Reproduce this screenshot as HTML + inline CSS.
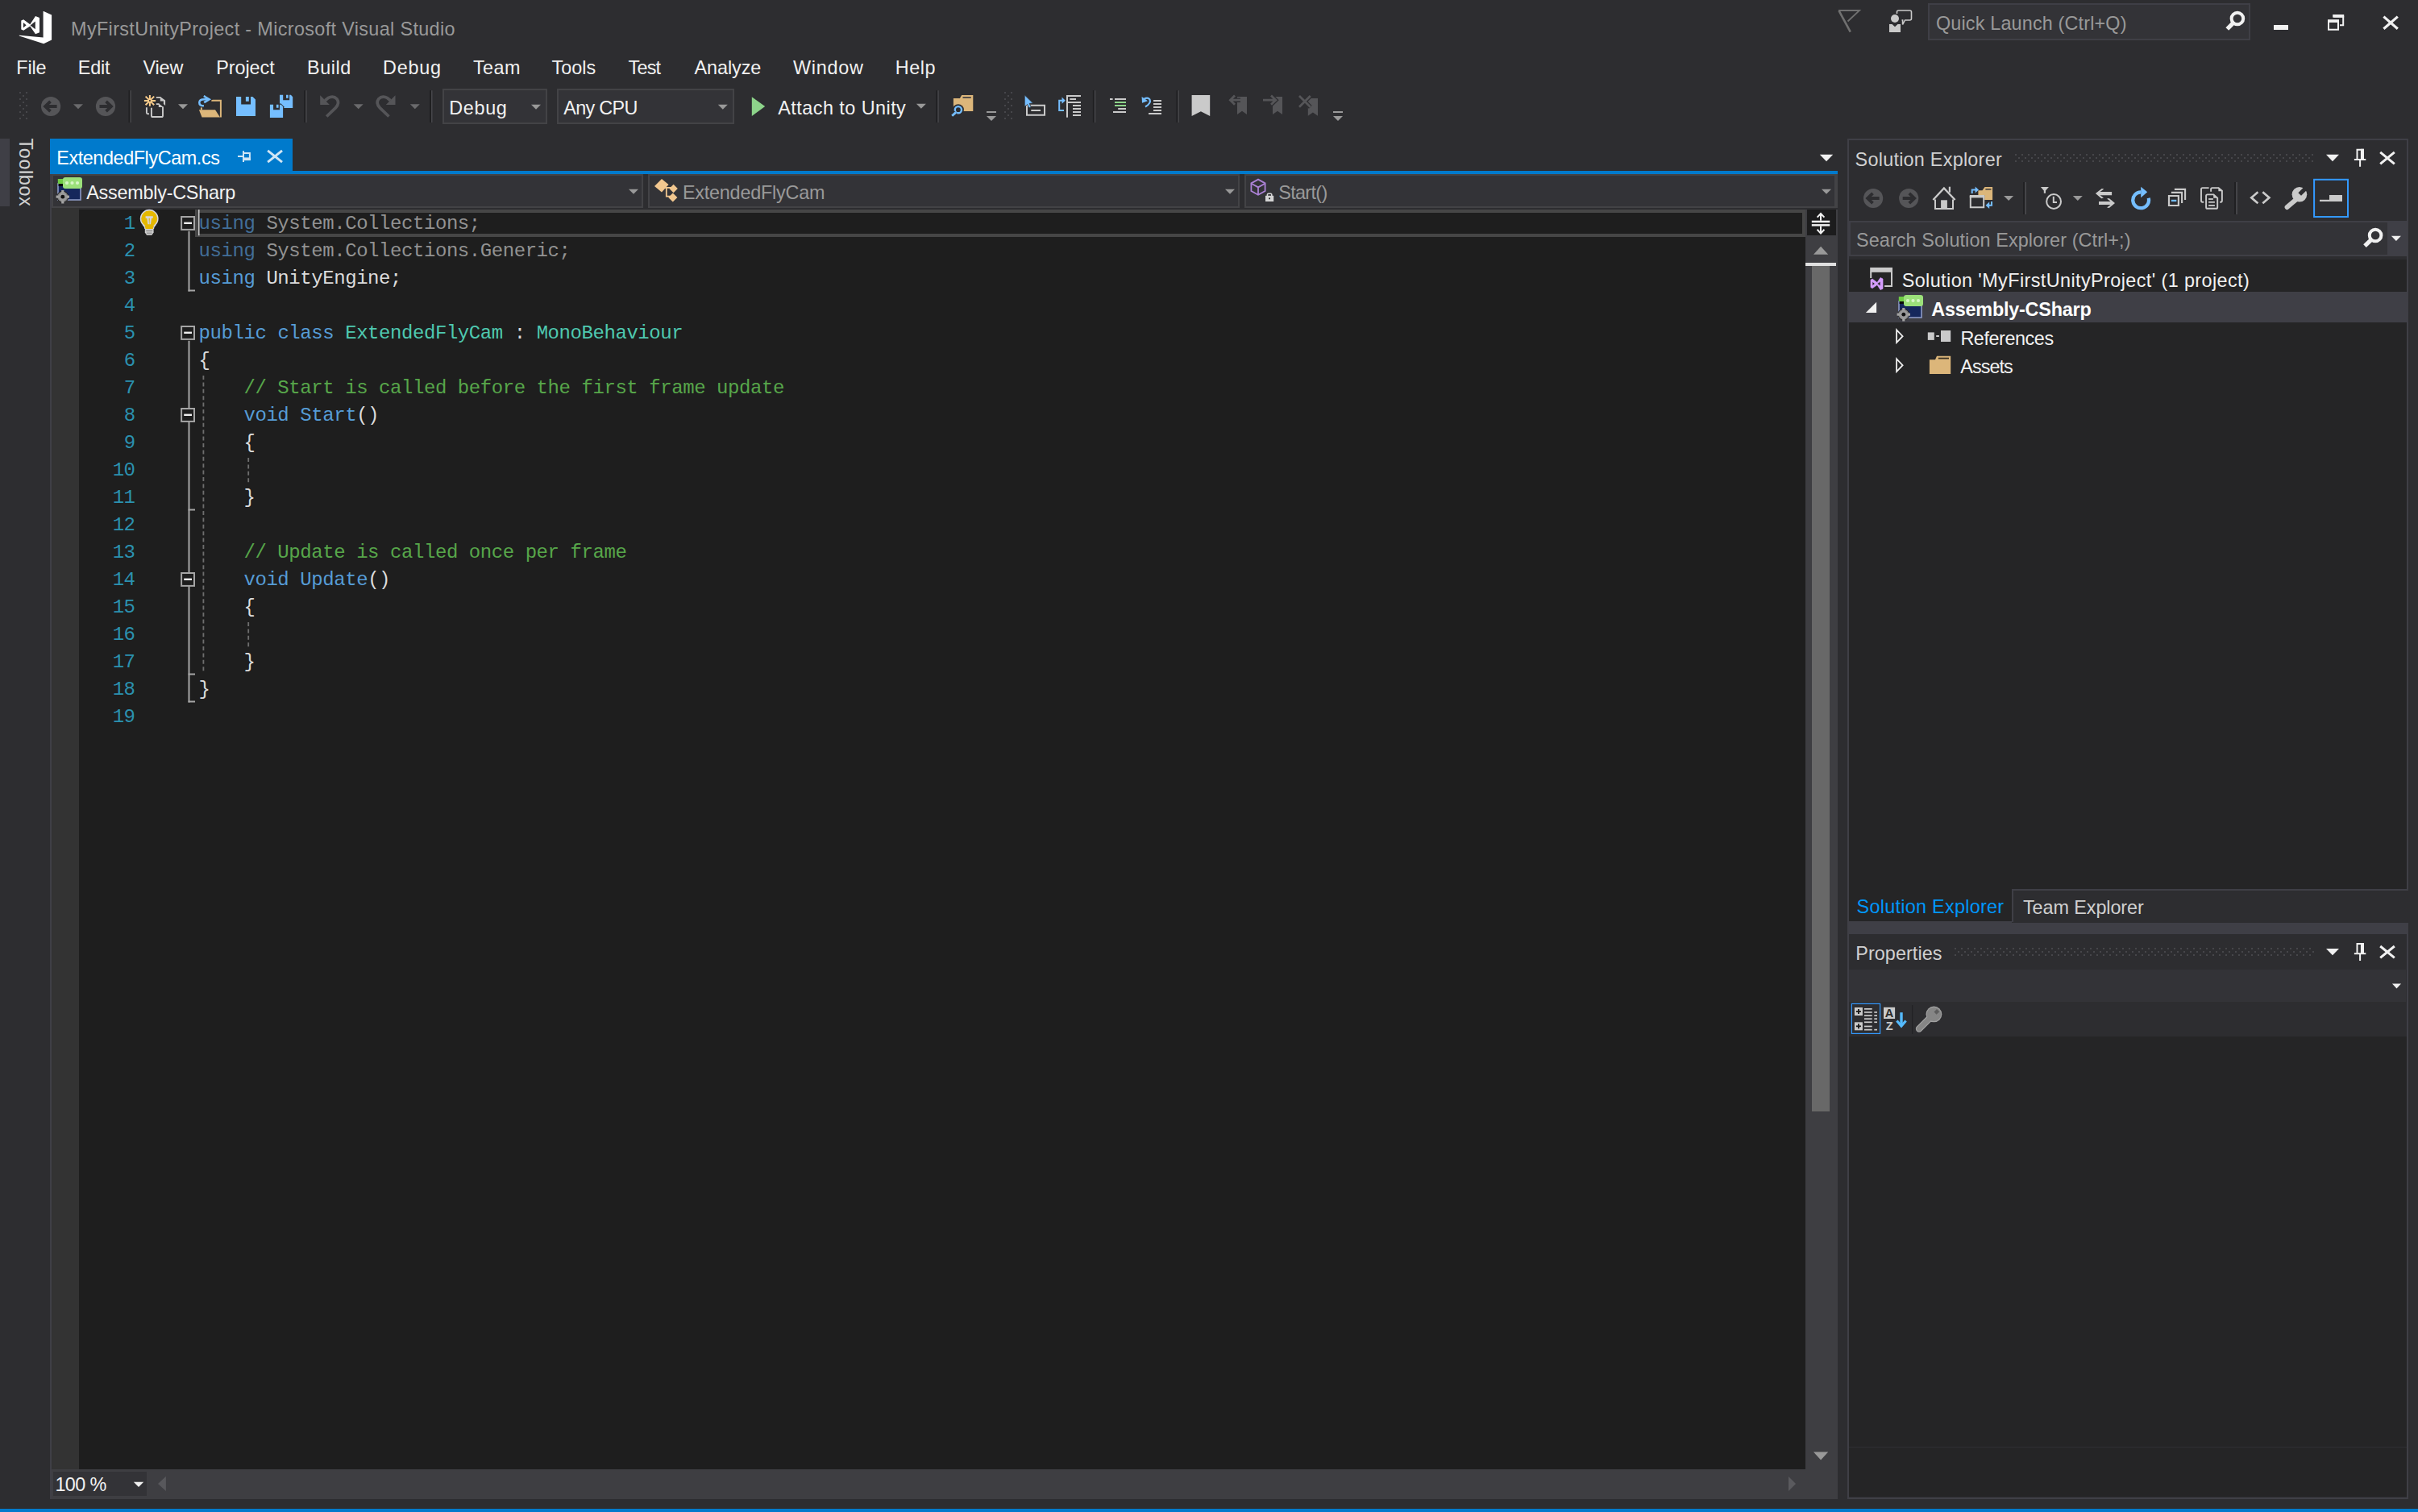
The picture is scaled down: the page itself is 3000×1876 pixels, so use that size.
<!DOCTYPE html>
<html><head><meta charset="utf-8"><title>MyFirstUnityProject - Microsoft Visual Studio</title>
<style>
html,body{margin:0;padding:0;background:#2D2D30;overflow:hidden}
#r{position:relative;width:3000px;height:1876px;overflow:hidden;background:#2D2D30;font-family:"Liberation Sans",sans-serif}
#r div,#r span,#r svg{position:absolute;display:block;white-space:pre}
#r .c{font-family:"Liberation Mono",monospace;font-size:24px;line-height:24px;letter-spacing:-0.435px}
#r .c i{font-style:normal}
</style></head>
<body><div id="r">
<div style="left:2392px;top:4.3px;width:400px;height:45.5px;background:#333337;box-sizing:border-box;border:2px solid #3F3F46"></div>
<div style="left:549px;top:110.2px;width:130px;height:43.4px;background:#333337;box-sizing:border-box;border:2px solid #434346"></div>
<div style="left:691px;top:110.2px;width:220px;height:43.4px;background:#333337;box-sizing:border-box;border:2px solid #434346"></div>
<div style="left:0px;top:172px;width:12px;height:84px;background:#3F3F46;"></div>
<div style="left:62px;top:172px;width:301px;height:44px;background:#007ACC;"></div>
<div style="left:62px;top:212px;width:2218px;height:4px;background:#007ACC;"></div>
<div style="left:62px;top:216px;width:2218px;height:42px;background:#434346;"></div>
<div style="left:62px;top:216px;width:2.3px;height:1644px;background:#3F3F46;"></div>
<div style="left:66.2px;top:218px;width:729.8px;height:37.8px;background:#333337;"></div>
<div style="left:797.9px;top:216px;width:5.9px;height:42px;background:#2D2D30;"></div>
<div style="left:806px;top:218px;width:730px;height:37.8px;background:#333337;"></div>
<div style="left:1537.9px;top:216px;width:5.9px;height:42px;background:#2D2D30;"></div>
<div style="left:1546px;top:218px;width:730px;height:37.8px;background:#333337;"></div>
<div style="left:64.3px;top:260px;width:2175.7px;height:1563px;background:#1E1E1E;"></div>
<div style="left:64px;top:258px;width:34px;height:1565px;background:#333333;"></div>
<div style="left:242.4px;top:260px;width:1997.6px;height:34px;background:transparent;box-sizing:border-box;border:4px solid #464646"></div>
<div style="left:2240px;top:260px;width:40px;height:1563px;background:#3E3E42;"></div>
<div style="left:2241.8px;top:260px;width:36.2px;height:32px;background:#1C1C1D;"></div>
<div style="left:2240px;top:326.1px;width:38px;height:3.9px;background:#E0E0E0;"></div>
<div style="left:2248px;top:330px;width:22px;height:1048.5px;background:#686868;"></div>
<div style="left:64.3px;top:1823px;width:2215.7px;height:37px;background:#3E3E42;"></div>
<div style="left:65.9px;top:1826px;width:116.1px;height:30px;background:#333337;"></div>
<div style="left:0px;top:1871.6px;width:3000px;height:5px;background:#007ACC;"></div>
<div style="left:2292px;top:172px;width:696px;height:933px;background:#2D2D30;box-sizing:border-box;border:2px solid #3F3F46"></div>
<div style="left:2294px;top:273.7px;width:692px;height:44.3px;background:#3F3F46;"></div>
<div style="left:2296px;top:275.8px;width:666px;height:40px;background:#333337;"></div>
<div style="left:2294px;top:322px;width:692px;height:781px;background:#252526;"></div>
<div style="left:2294px;top:361.8px;width:692px;height:38px;background:#3F3F46;"></div>
<div style="left:2292px;top:1103px;width:204px;height:40px;background:#252526;"></div>
<div style="left:2292px;top:1103px;width:2px;height:40px;background:#3F3F46;"></div>
<div style="left:2496px;top:1103px;width:492px;height:41px;background:#2D2D30;box-sizing:border-box;border-top:2px solid #3F3F46;border-left:2px solid #3F3F46"></div>
<div style="left:2292px;top:1145px;width:696px;height:14px;background:#3F3F46;"></div>
<div style="left:2292px;top:1143px;width:204px;height:2px;background:#3F3F46;"></div>
<div style="left:2292px;top:1159px;width:696px;height:701px;background:#2D2D30;box-sizing:border-box;border:2px solid #3F3F46;border-top:none"></div>
<div style="left:2294px;top:1203px;width:691px;height:40px;background:#333337;"></div>
<div style="left:2294px;top:1285.5px;width:692px;height:571.7px;background:#252526;"></div>
<div style="left:2294px;top:1795px;width:692px;height:1px;background:#2F2F33;"></div>
<span class="c" style="left:153.63px;top:266.00px;color:#2B91AF">1</span>
<span class="c" style="left:246.6px;top:266.00px"><i style="color:#426E98">using</i><i style="color:#929292"> System.Collections;</i></span>
<span class="c" style="left:153.63px;top:300.00px;color:#2B91AF">2</span>
<span class="c" style="left:246.6px;top:300.00px"><i style="color:#426E98">using</i><i style="color:#929292"> System.Collections.Generic;</i></span>
<span class="c" style="left:153.63px;top:334.00px;color:#2B91AF">3</span>
<span class="c" style="left:246.6px;top:334.00px"><i style="color:#569CD6">using</i><i style="color:#DCDCDC"> UnityEngine;</i></span>
<span class="c" style="left:153.63px;top:368.00px;color:#2B91AF">4</span>
<span class="c" style="left:153.63px;top:402.00px;color:#2B91AF">5</span>
<span class="c" style="left:246.6px;top:402.00px"><i style="color:#569CD6">public</i><i style="color:#DCDCDC"> </i><i style="color:#569CD6">class</i><i style="color:#DCDCDC"> </i><i style="color:#4EC9B0">ExtendedFlyCam</i><i style="color:#DCDCDC"> : </i><i style="color:#4EC9B0">MonoBehaviour</i></span>
<span class="c" style="left:153.63px;top:436.00px;color:#2B91AF">6</span>
<span class="c" style="left:246.6px;top:436.00px"><i style="color:#DCDCDC">{</i></span>
<span class="c" style="left:153.63px;top:470.00px;color:#2B91AF">7</span>
<span class="c" style="left:246.6px;top:470.00px"><i style="color:#DCDCDC">    </i><i style="color:#57A64A">// Start is called before the first frame update</i></span>
<span class="c" style="left:153.63px;top:504.00px;color:#2B91AF">8</span>
<span class="c" style="left:246.6px;top:504.00px"><i style="color:#DCDCDC">    </i><i style="color:#569CD6">void</i><i style="color:#DCDCDC"> </i><i style="color:#569CD6">Start</i><i style="color:#DCDCDC">()</i></span>
<span class="c" style="left:153.63px;top:538.00px;color:#2B91AF">9</span>
<span class="c" style="left:246.6px;top:538.00px"><i style="color:#DCDCDC">    {</i></span>
<span class="c" style="left:139.67px;top:572.00px;color:#2B91AF">10</span>
<span class="c" style="left:139.67px;top:606.00px;color:#2B91AF">11</span>
<span class="c" style="left:246.6px;top:606.00px"><i style="color:#DCDCDC">    }</i></span>
<span class="c" style="left:139.67px;top:640.00px;color:#2B91AF">12</span>
<span class="c" style="left:139.67px;top:674.00px;color:#2B91AF">13</span>
<span class="c" style="left:246.6px;top:674.00px"><i style="color:#DCDCDC">    </i><i style="color:#57A64A">// Update is called once per frame</i></span>
<span class="c" style="left:139.67px;top:708.00px;color:#2B91AF">14</span>
<span class="c" style="left:246.6px;top:708.00px"><i style="color:#DCDCDC">    </i><i style="color:#569CD6">void</i><i style="color:#DCDCDC"> </i><i style="color:#569CD6">Update</i><i style="color:#DCDCDC">()</i></span>
<span class="c" style="left:139.67px;top:742.00px;color:#2B91AF">15</span>
<span class="c" style="left:246.6px;top:742.00px"><i style="color:#DCDCDC">    {</i></span>
<span class="c" style="left:139.67px;top:776.00px;color:#2B91AF">16</span>
<span class="c" style="left:139.67px;top:810.00px;color:#2B91AF">17</span>
<span class="c" style="left:246.6px;top:810.00px"><i style="color:#DCDCDC">    }</i></span>
<span class="c" style="left:139.67px;top:844.00px;color:#2B91AF">18</span>
<span class="c" style="left:246.6px;top:844.00px"><i style="color:#DCDCDC">}</i></span>
<span class="c" style="left:139.67px;top:878.00px;color:#2B91AF">19</span>
<svg style="left:0;top:0" width="3000" height="1876" viewBox="0 0 3000 1876"><path d="M54.2 13.9L64.1 18.6V49.6L54.2 54.2L23.8 44.4V43.7L53.6 46.4V13.9Z" fill="#FFFFFF" /><path d="M26.3 25.6L29.2 24.2L37.3 30.3L44 19.9L49 22.1V40.3L44 42.2L37.3 32.6L29.2 37.8L26.3 36.4Z M28.9 28V34.6L32.6 31.3Z M43.8 26.6V36.2L37.6 31.4Z" fill="#FFFFFF" fill-rule="evenodd"/><path d="M2281 13H2307L2292.5 26.5" fill="none" stroke="#707070" stroke-width="1.8" /><path d="M2281.6 13.4L2295.8 39.6" fill="none" stroke="#707070" stroke-width="2.6" /><circle cx="2351" cy="23" r="5" fill="#CACACA"/><path d="M2344 30H2347.5L2351 33.2L2354.5 30H2358V40H2344Z" fill="#CACACA" /><path d="M2353.5 17V15Q2353.5 13 2355.5 13H2369.5Q2371.5 13 2371.5 15V23Q2371.5 25 2369.5 25H2363.5L2360.6 30.5V25H2359.5" fill="none" stroke="#CACACA" stroke-width="1.6" /><circle cx="2775.9" cy="23" r="7.3" fill="none" stroke="#F1F1F1" stroke-width="4"/><path d="M2770.6 28.6L2763.3 36" fill="none" stroke="#F1F1F1" stroke-width="5.2" /><rect x="2821" y="31" width="18" height="6" fill="#F1F1F1" /><path d="M2895.2 20.8H2907.2V31.3H2903" fill="none" stroke="#F1F1F1" stroke-width="2" /><rect x="2894.2" y="18" width="14" height="3.6" fill="#F1F1F1" /><path d="M2889 26.8H2901V36.8H2889Z" fill="none" stroke="#F1F1F1" stroke-width="2" /><rect x="2888" y="24.2" width="14" height="3.6" fill="#F1F1F1" /><path d="M2957.4 20.6L2974.8 35.8M2974.8 20.6L2957.4 35.8" fill="none" stroke="#F1F1F1" stroke-width="3.2" /><rect x="24" y="114" width="2" height="2" fill="#46464A" /><rect x="32" y="114" width="2" height="2" fill="#46464A" /><rect x="28" y="118" width="2" height="2" fill="#46464A" /><rect x="24" y="122" width="2" height="2" fill="#46464A" /><rect x="32" y="122" width="2" height="2" fill="#46464A" /><rect x="28" y="126" width="2" height="2" fill="#46464A" /><rect x="24" y="130" width="2" height="2" fill="#46464A" /><rect x="32" y="130" width="2" height="2" fill="#46464A" /><rect x="28" y="134" width="2" height="2" fill="#46464A" /><rect x="24" y="138" width="2" height="2" fill="#46464A" /><rect x="32" y="138" width="2" height="2" fill="#46464A" /><rect x="28" y="142" width="2" height="2" fill="#46464A" /><rect x="24" y="146" width="2" height="2" fill="#46464A" /><rect x="32" y="146" width="2" height="2" fill="#46464A" /><rect x="159.5" y="112.2" width="1.9" height="39.8" fill="#1F1F21" /><rect x="161.4" y="112.2" width="1.5" height="39.8" fill="#46464A" /><rect x="377.3" y="112.2" width="1.9" height="39.8" fill="#1F1F21" /><rect x="379.2" y="112.2" width="1.5" height="39.8" fill="#46464A" /><rect x="533.1" y="112.2" width="1.9" height="39.8" fill="#1F1F21" /><rect x="535.0" y="112.2" width="1.5" height="39.8" fill="#46464A" /><rect x="1161.4" y="112.2" width="1.9" height="39.8" fill="#1F1F21" /><rect x="1163.3000000000002" y="112.2" width="1.5" height="39.8" fill="#46464A" /><rect x="1355.9" y="112.2" width="1.9" height="39.8" fill="#1F1F21" /><rect x="1357.8000000000002" y="112.2" width="1.5" height="39.8" fill="#46464A" /><rect x="1459.5" y="112.2" width="1.9" height="39.8" fill="#1F1F21" /><rect x="1461.4" y="112.2" width="1.5" height="39.8" fill="#46464A" /><circle cx="63.1" cy="132" r="12.1" fill="#555558"/><path d="M70.6 132H56.1M62.5 125.8L56.1 132L62.5 138.2" fill="none" stroke="#2D2D30" stroke-width="3.8" /><path d="M91.0 129.2H103.0L97 135.2Z" fill="#6A6A6C" /><circle cx="131" cy="132" r="12.1" fill="#555558"/><path d="M123.5 132H138M131.6 125.8L138 132L131.6 138.2" fill="none" stroke="#2D2D30" stroke-width="3.8" /><path d="M185.9 117.9V131.8M178.9 124.9H193.1M180.6 119.6L191.2 130.2M191.2 119.6L180.6 130.2" fill="none" stroke="#F7CB8A" stroke-width="2" /><rect x="185.1" y="124.1" width="1.6" height="1.6" fill="#1E1E20" /><path d="M193.8 120.9H199.4" fill="none" stroke="#CACACA" stroke-width="1.8" /><path d="M198.8 120.1L205.1 124.6V131L202.9 129V125.4H198.8Z" fill="#CACACA" /><path d="M193.8 129.1H197.4" fill="none" stroke="#CACACA" stroke-width="1.8" /><path d="M187.9 133.8V143.4Q187.9 145 189.5 145H200.4Q202 145 202 143.4V132.6" fill="none" stroke="#CACACA" stroke-width="1.9" /><path d="M196.8 128.3L202.9 132.9H196.8Z" fill="#CACACA" /><path d="M181.9 133.3V139.8Q181.9 141.3 183.4 141.3H184.9" fill="none" stroke="#CACACA" stroke-width="1.9" /><path d="M221.0 129.2H233.0L227 135.2Z" fill="#999999" /><path d="M262.3 124.7H273.9V145.6" fill="none" stroke="#DCB67A" stroke-width="2" /><path d="M246.9 136.3H267L273 145.6H250.6Z" fill="#DCB67A" /><rect x="248.9" y="133.4" width="2" height="3" fill="#DCB67A" /><path d="M252.8 119.2L259.6 123.2L253.2 127.2" fill="none" stroke="#2D2D30" stroke-width="4.6" /><path d="M252.9 131.2C249.4 131.2 247.3 129.6 247.3 127.4C247.3 124.8 250 123.3 253.5 123.3H258" fill="none" stroke="#75BEFF" stroke-width="2.5" /><path d="M252.8 119.2L259.6 123.2L253.2 127.2" fill="none" stroke="#75BEFF" stroke-width="2.6" /><path d="M293 120H313.5L317 123.5V144H293Z M299.2 120V129.5H311.0V120H308.8V125.8H304.9V120Z" fill="#75BEFF" fill-rule="evenodd"/><path d="M347 117.8H360.8375L363.2 120.1625V134.0H347Z M351.185 117.8V124.21249999999999H359.15V117.8H357.665V121.715H355.0325V117.8Z" fill="#75BEFF" fill-rule="evenodd"/><path d="M333.6 128.5H348.6L352.3 132.2V147.3H333.6Z" fill="#2D2D30" /><path d="M334.9 129.8H348.73749999999995L351.09999999999997 132.16250000000002V146.0H334.9Z M339.085 129.8V136.2125H347.04999999999995V129.8H345.565V133.715H342.9325V129.8Z" fill="#75BEFF" fill-rule="evenodd"/><g transform="translate(396.7,117.5)"><path d="M8.5 27L19.6 16.4Q25.2 10.6 21.2 5.2Q16.8 0.6 10.2 4.2L6.5 7.2" fill="none" stroke="#555558" stroke-width="3.7"/><path d="M0.5 0.8V12.6H12.2Z" fill="#555558"/></g><path d="M438.7 129.2H450.7L444.7 135.2Z" fill="#6A6A6C" /><g transform="translate(491.0,117.5) scale(-1,1)"><path d="M8.5 27L19.6 16.4Q25.2 10.6 21.2 5.2Q16.8 0.6 10.2 4.2L6.5 7.2" fill="none" stroke="#555558" stroke-width="3.7"/><path d="M0.5 0.8V12.6H12.2Z" fill="#555558"/></g><path d="M508.79999999999995 129.2H520.8L514.8 135.2Z" fill="#6A6A6C" /><path d="M659.0 129.8H671.0L665 135.8Z" fill="#999999" /><path d="M890.8 129.8H902.8L896.8 135.8Z" fill="#999999" /><path d="M932.8 120.2L949.2 132L932.8 144Z" fill="#8DD48A" /><path d="M1136.9 128.8H1148.9L1142.9 134.8Z" fill="#999999" /><path d="M1182.9 122.1H1190.9L1193.2 117.9H1207.3V138.1H1182.9Z" fill="#DCB67A" /><rect x="1194.5" y="120.3" width="10.3" height="1.4" fill="#1f2433" /><circle cx="1188.9" cy="136.2" r="7" fill="#2D2D30"/><circle cx="1188.9" cy="136.2" r="4.1" fill="#2D2D30" stroke="#75BEFF" stroke-width="2.4"/><path d="M1186 139.4L1181.2 143.8" fill="none" stroke="#2D2D30" stroke-width="4.6" /><path d="M1186 139.4L1181.2 143.8" fill="none" stroke="#75BEFF" stroke-width="2.8" /><rect x="1224" y="138" width="12" height="2" fill="#999999" /><path d="M1224 144H1236L1230 150Z" fill="#999999" /><rect x="1246" y="114" width="2" height="2" fill="#46464A" /><rect x="1254" y="114" width="2" height="2" fill="#46464A" /><rect x="1250" y="118" width="2" height="2" fill="#46464A" /><rect x="1246" y="122" width="2" height="2" fill="#46464A" /><rect x="1254" y="122" width="2" height="2" fill="#46464A" /><rect x="1250" y="126" width="2" height="2" fill="#46464A" /><rect x="1246" y="130" width="2" height="2" fill="#46464A" /><rect x="1254" y="130" width="2" height="2" fill="#46464A" /><rect x="1250" y="134" width="2" height="2" fill="#46464A" /><rect x="1246" y="138" width="2" height="2" fill="#46464A" /><rect x="1254" y="138" width="2" height="2" fill="#46464A" /><rect x="1250" y="142" width="2" height="2" fill="#46464A" /><rect x="1246" y="146" width="2" height="2" fill="#46464A" /><rect x="1254" y="146" width="2" height="2" fill="#46464A" /><path d="M1274 130.8H1296V142.8H1274Z" fill="#2D2D30" stroke="#CACACA" stroke-width="2" /><rect x="1279.3" y="136" width="11.7" height="2" fill="#CACACA" /><path d="M1271.2 117.8L1281.6 128L1277.3 128.4L1279.3 133L1276.6 134L1274.6 129.6L1271.2 132.4Z" fill="#75BEFF" stroke="#2D2D30" stroke-width="0.8" /><rect x="1323" y="118" width="2" height="27.7" fill="#CACACA" /><rect x="1323" y="118" width="18" height="2" fill="#CACACA" /><rect x="1327.3" y="122" width="7.7" height="2" fill="#CACACA" /><rect x="1323" y="126" width="18" height="2" fill="#CACACA" /><rect x="1331" y="130" width="10" height="2" fill="#CACACA" /><rect x="1331" y="134" width="10" height="2" fill="#CACACA" /><rect x="1331" y="138" width="10" height="2" fill="#CACACA" /><rect x="1331" y="142" width="10" height="2" fill="#CACACA" /><path d="M1320 137H1314.2V124.7H1320" fill="none" stroke="#75BEFF" stroke-width="2" /><path d="M1317.5 120.6L1321.8 124.7L1317.5 128.8Z" fill="#75BEFF" /><rect x="1377" y="122" width="3.6" height="2" fill="#CACACA" /><rect x="1383" y="122" width="14" height="2" fill="#CACACA" /><rect x="1383" y="126" width="14" height="2" fill="#8DD48A" /><rect x="1383" y="130" width="14" height="2" fill="#8DD48A" /><rect x="1387.2" y="134" width="9.8" height="2" fill="#CACACA" /><rect x="1381" y="138" width="16" height="2" fill="#CACACA" /><path d="M1421 132.5Q1428.5 128 1426.5 123.5Q1424 120.2 1419.5 122.8" fill="none" stroke="#75BEFF" stroke-width="2.2" /><path d="M1416.6 120L1417 127.8L1424 125.2Z" fill="#75BEFF" /><rect x="1431" y="124" width="10" height="2" fill="#CACACA" /><rect x="1431" y="128" width="10" height="2" fill="#CACACA" /><rect x="1431" y="132" width="10" height="2" fill="#CACACA" /><rect x="1431" y="136" width="10" height="2" fill="#CACACA" /><rect x="1425" y="140" width="16" height="2" fill="#CACACA" /><path d="M1478.6 118H1501.2V144L1489.9 138.3L1478.6 144Z" fill="#CACACA" /><path d="M1535 120H1547V142L1541.0 137.8L1535 142Z" fill="#555558" /><path d="M1539 124.2H1527.5M1532 118.6L1526.4 124.2L1532 129.8" fill="none" stroke="#2D2D30" stroke-width="5.4" /><path d="M1539 124.2H1527.5M1532 118.6L1526.4 124.2L1532 129.8" fill="none" stroke="#555558" stroke-width="2.8" /><path d="M1579 120H1591V142L1585.0 137.8L1579 142Z" fill="#555558" /><path d="M1567 124.2H1582M1577 118.6L1582.8 124.2L1577 129.8" fill="none" stroke="#2D2D30" stroke-width="5.4" /><path d="M1567 124.2H1582M1577 118.6L1582.8 124.2L1577 129.8" fill="none" stroke="#555558" stroke-width="2.8" /><path d="M1622.8 122H1635.0V143.8L1628.8999999999999 139.60000000000002L1622.8 143.8Z" fill="#555558" /><path d="M1612 119L1625.8 132.8M1625.8 119L1612 132.8" fill="none" stroke="#2D2D30" stroke-width="5.4" /><path d="M1612 119L1625.8 132.8M1625.8 119L1612 132.8" fill="none" stroke="#555558" stroke-width="2.8" /><rect x="1654" y="138" width="12" height="2" fill="#999999" /><path d="M1654 144H1666L1660 150Z" fill="#999999" /><rect x="295" y="193" width="6.3" height="2" fill="#D0E6F5" /><rect x="301" y="187.2" width="2" height="13.8" fill="#D0E6F5" /><path d="M303 190.1H309.9V198.1H303" fill="none" stroke="#D0E6F5" stroke-width="2" /><rect x="303" y="195.4" width="7.9" height="3.7" fill="#D0E6F5" /><path d="M332.2 186.9L350 201.2M350 186.9L332.2 201.2" fill="none" stroke="#D0E6F5" stroke-width="3" /><path d="M2257.8 191.7H2274.2L2266 200.2Z" fill="#F1F1F1" /><path d="M780.0 234.8H792.0L786 240.8Z" fill="#999999" /><path d="M1520.0 234.8H1532.0L1526 240.8Z" fill="#999999" /><path d="M2260.0 234.8H2272.0L2266 240.8Z" fill="#999999" /><rect x="72" y="228" width="28" height="20" fill="#15275C" stroke="#8C9AC6" stroke-width="1.6"/><rect x="72.6" y="227.4" width="26.8" height="3.6" fill="#0A0A0A" /><rect x="71.8" y="222" width="8" height="6" fill="#6FCB45" /><rect x="78" y="220" width="24" height="14" rx="3" fill="#9BE07A"/><circle cx="83.0" cy="227" r="2.1" fill="#D6F5C6"/><circle cx="89.5" cy="227" r="2.1" fill="#D6F5C6"/><circle cx="96.0" cy="227" r="2.1" fill="#D6F5C6"/><circle cx="77.8" cy="244.2" r="7.0" fill="#7E7E7E" stroke="#1a1a1a" stroke-width="1"/><path d="M77.8 236V252.4M69.6 244.2H86" fill="none" stroke="#A4A4A4" stroke-width="3.2" /><circle cx="77.8" cy="244.2" r="5.2" fill="#9A9A9A"/><circle cx="77.8" cy="244.2" r="2.4" fill="#111"/><path d="M821 222L829.5 229L821 238.5L812 231Z" fill="#F2C78F" /><path d="M820 232.8H833M826.8 232.8V243.6H833" fill="none" stroke="#F2C78F" stroke-width="1.8" /><path d="M835.6 228.8L840.8000000000001 234L835.6 239.2L830.4 234Z" fill="#F2C78F" /><path d="M834.8 239.4L840.4 245L834.8 250.6L829.1999999999999 245Z" fill="#F2C78F" /><rect x="828.2" y="235.2" width="3" height="6" fill="#333337" /><path d="M1561 222.6L1569.6 227.4V237L1561 241.8L1552.4 237V227.4Z" fill="none" stroke="#AC82D6" stroke-width="1.8" /><path d="M1553 228L1561 232.4L1569 228M1561 232.4V241.5" fill="none" stroke="#AC82D6" stroke-width="1.8" /><rect x="1570" y="242.8" width="10.2" height="7.2" fill="#D4D4D4" /><path d="M1572.4 243V241.6Q1572.4 240.2 1573.8 240.2H1576.4Q1577.8 240.2 1577.8 241.6V243" fill="none" stroke="#D4D4D4" stroke-width="1.6" /><rect x="1574.2" y="245.4" width="1.8" height="1.8" fill="#222" /><circle cx="185.2" cy="271.2" r="10.7" fill="#E5B800" stroke="#D6D6E0" stroke-width="1.4"/><path d="M179.3 279.6L180 284H190.4L191.1 279.6Z" fill="#E5B800" /><path d="M177.2 278.5Q180 281.5 180 284M193.2 278.5Q190.4 281.5 190.4 284" fill="none" stroke="#D6D6E0" stroke-width="1.4" /><path d="M180.6 268.2H189.8V270.7H180.6Z M182.4 270.7L183.4 278.2H185L184.5 270.7Z M188 270.7L187 278.2H185.4L185.9 270.7Z" fill="#D6D6E0" /><path d="M179.8 284H190.6V288.6L188.4 291.8H182L179.8 288.6Z" fill="#D0D0D0" /><rect x="181.2" y="285.8" width="8" height="1.3" fill="#8A8A8A" /><rect x="181.8" y="288.6" width="6.8" height="1.2" fill="#8A8A8A" /><rect x="246.1" y="260" width="1.4" height="32.2" fill="#D4D4D4" /><rect x="233.5" y="286.8" width="2" height="74.69999999999999" fill="#A5A5A5" /><rect x="233.5" y="359.5" width="8.5" height="2" fill="#A5A5A5" /><rect x="233.5" y="422.8" width="2" height="448.7" fill="#A5A5A5" /><rect x="233.5" y="869.5" width="8.5" height="2" fill="#A5A5A5" /><rect x="233.5" y="631.5" width="8.5" height="2" fill="#A5A5A5" /><rect x="233.5" y="835.5" width="8.5" height="2" fill="#A5A5A5" /><rect x="225.1" y="269.0" width="15.9" height="15.9" fill="#1E1E1E" stroke="#A5A5A5" stroke-width="2"/><rect x="228.2" y="275.6" width="9.8" height="2.4" fill="#EDEDED" /><rect x="225.1" y="405.0" width="15.9" height="15.9" fill="#1E1E1E" stroke="#A5A5A5" stroke-width="2"/><rect x="228.2" y="411.6" width="9.8" height="2.4" fill="#EDEDED" /><rect x="225.1" y="507.0" width="15.9" height="15.9" fill="#1E1E1E" stroke="#A5A5A5" stroke-width="2"/><rect x="228.2" y="513.6" width="9.8" height="2.4" fill="#EDEDED" /><rect x="225.1" y="711.0" width="15.9" height="15.9" fill="#1E1E1E" stroke="#A5A5A5" stroke-width="2"/><rect x="228.2" y="717.5999999999999" width="9.8" height="2.4" fill="#EDEDED" /><path d="M252.4 466V833" fill="none" stroke="#6E6E6E" stroke-width="1.8" stroke-dasharray="5 3.4"/><path d="M308.2 568V601" fill="none" stroke="#6E6E6E" stroke-width="1.8" stroke-dasharray="5 3.4"/><path d="M308.2 772V805" fill="none" stroke="#6E6E6E" stroke-width="1.8" stroke-dasharray="5 3.4"/><rect x="2247.8" y="273.7" width="22.4" height="2.5" fill="#F1F1F1" /><rect x="2247.8" y="278.1" width="22.4" height="2.5" fill="#F1F1F1" /><path d="M2259 273.7V265.5M2254.6 269.6L2259 265L2263.4 269.6" fill="none" stroke="#F1F1F1" stroke-width="2" /><path d="M2259 280.6V289M2254.6 284.8L2259 289.6L2263.4 284.8" fill="none" stroke="#F1F1F1" stroke-width="2" /><path d="M2250 315.8H2268.2L2259.1 305.7Z" fill="#999999" /><path d="M2250 1801.5H2268.2L2259.1 1811.5Z" fill="#999999" /><path d="M205.9 1831.8V1850L196 1840.9Z" fill="#58585C" /><path d="M2219 1832V1850L2228 1841Z" fill="#5A5A5E" /><path d="M165.8 1838.7H178.2L172 1845.0Z" fill="#F1F1F1" /><rect x="2500" y="191" width="2" height="2" fill="#46464A" /><rect x="2500" y="199" width="2" height="2" fill="#46464A" /><rect x="2504" y="195" width="2" height="2" fill="#46464A" /><rect x="2508" y="191" width="2" height="2" fill="#46464A" /><rect x="2508" y="199" width="2" height="2" fill="#46464A" /><rect x="2512" y="195" width="2" height="2" fill="#46464A" /><rect x="2516" y="191" width="2" height="2" fill="#46464A" /><rect x="2516" y="199" width="2" height="2" fill="#46464A" /><rect x="2520" y="195" width="2" height="2" fill="#46464A" /><rect x="2524" y="191" width="2" height="2" fill="#46464A" /><rect x="2524" y="199" width="2" height="2" fill="#46464A" /><rect x="2528" y="195" width="2" height="2" fill="#46464A" /><rect x="2532" y="191" width="2" height="2" fill="#46464A" /><rect x="2532" y="199" width="2" height="2" fill="#46464A" /><rect x="2536" y="195" width="2" height="2" fill="#46464A" /><rect x="2540" y="191" width="2" height="2" fill="#46464A" /><rect x="2540" y="199" width="2" height="2" fill="#46464A" /><rect x="2544" y="195" width="2" height="2" fill="#46464A" /><rect x="2548" y="191" width="2" height="2" fill="#46464A" /><rect x="2548" y="199" width="2" height="2" fill="#46464A" /><rect x="2552" y="195" width="2" height="2" fill="#46464A" /><rect x="2556" y="191" width="2" height="2" fill="#46464A" /><rect x="2556" y="199" width="2" height="2" fill="#46464A" /><rect x="2560" y="195" width="2" height="2" fill="#46464A" /><rect x="2564" y="191" width="2" height="2" fill="#46464A" /><rect x="2564" y="199" width="2" height="2" fill="#46464A" /><rect x="2568" y="195" width="2" height="2" fill="#46464A" /><rect x="2572" y="191" width="2" height="2" fill="#46464A" /><rect x="2572" y="199" width="2" height="2" fill="#46464A" /><rect x="2576" y="195" width="2" height="2" fill="#46464A" /><rect x="2580" y="191" width="2" height="2" fill="#46464A" /><rect x="2580" y="199" width="2" height="2" fill="#46464A" /><rect x="2584" y="195" width="2" height="2" fill="#46464A" /><rect x="2588" y="191" width="2" height="2" fill="#46464A" /><rect x="2588" y="199" width="2" height="2" fill="#46464A" /><rect x="2592" y="195" width="2" height="2" fill="#46464A" /><rect x="2596" y="191" width="2" height="2" fill="#46464A" /><rect x="2596" y="199" width="2" height="2" fill="#46464A" /><rect x="2600" y="195" width="2" height="2" fill="#46464A" /><rect x="2604" y="191" width="2" height="2" fill="#46464A" /><rect x="2604" y="199" width="2" height="2" fill="#46464A" /><rect x="2608" y="195" width="2" height="2" fill="#46464A" /><rect x="2612" y="191" width="2" height="2" fill="#46464A" /><rect x="2612" y="199" width="2" height="2" fill="#46464A" /><rect x="2616" y="195" width="2" height="2" fill="#46464A" /><rect x="2620" y="191" width="2" height="2" fill="#46464A" /><rect x="2620" y="199" width="2" height="2" fill="#46464A" /><rect x="2624" y="195" width="2" height="2" fill="#46464A" /><rect x="2628" y="191" width="2" height="2" fill="#46464A" /><rect x="2628" y="199" width="2" height="2" fill="#46464A" /><rect x="2632" y="195" width="2" height="2" fill="#46464A" /><rect x="2636" y="191" width="2" height="2" fill="#46464A" /><rect x="2636" y="199" width="2" height="2" fill="#46464A" /><rect x="2640" y="195" width="2" height="2" fill="#46464A" /><rect x="2644" y="191" width="2" height="2" fill="#46464A" /><rect x="2644" y="199" width="2" height="2" fill="#46464A" /><rect x="2648" y="195" width="2" height="2" fill="#46464A" /><rect x="2652" y="191" width="2" height="2" fill="#46464A" /><rect x="2652" y="199" width="2" height="2" fill="#46464A" /><rect x="2656" y="195" width="2" height="2" fill="#46464A" /><rect x="2660" y="191" width="2" height="2" fill="#46464A" /><rect x="2660" y="199" width="2" height="2" fill="#46464A" /><rect x="2664" y="195" width="2" height="2" fill="#46464A" /><rect x="2668" y="191" width="2" height="2" fill="#46464A" /><rect x="2668" y="199" width="2" height="2" fill="#46464A" /><rect x="2672" y="195" width="2" height="2" fill="#46464A" /><rect x="2676" y="191" width="2" height="2" fill="#46464A" /><rect x="2676" y="199" width="2" height="2" fill="#46464A" /><rect x="2680" y="195" width="2" height="2" fill="#46464A" /><rect x="2684" y="191" width="2" height="2" fill="#46464A" /><rect x="2684" y="199" width="2" height="2" fill="#46464A" /><rect x="2688" y="195" width="2" height="2" fill="#46464A" /><rect x="2692" y="191" width="2" height="2" fill="#46464A" /><rect x="2692" y="199" width="2" height="2" fill="#46464A" /><rect x="2696" y="195" width="2" height="2" fill="#46464A" /><rect x="2700" y="191" width="2" height="2" fill="#46464A" /><rect x="2700" y="199" width="2" height="2" fill="#46464A" /><rect x="2704" y="195" width="2" height="2" fill="#46464A" /><rect x="2708" y="191" width="2" height="2" fill="#46464A" /><rect x="2708" y="199" width="2" height="2" fill="#46464A" /><rect x="2712" y="195" width="2" height="2" fill="#46464A" /><rect x="2716" y="191" width="2" height="2" fill="#46464A" /><rect x="2716" y="199" width="2" height="2" fill="#46464A" /><rect x="2720" y="195" width="2" height="2" fill="#46464A" /><rect x="2724" y="191" width="2" height="2" fill="#46464A" /><rect x="2724" y="199" width="2" height="2" fill="#46464A" /><rect x="2728" y="195" width="2" height="2" fill="#46464A" /><rect x="2732" y="191" width="2" height="2" fill="#46464A" /><rect x="2732" y="199" width="2" height="2" fill="#46464A" /><rect x="2736" y="195" width="2" height="2" fill="#46464A" /><rect x="2740" y="191" width="2" height="2" fill="#46464A" /><rect x="2740" y="199" width="2" height="2" fill="#46464A" /><rect x="2744" y="195" width="2" height="2" fill="#46464A" /><rect x="2748" y="191" width="2" height="2" fill="#46464A" /><rect x="2748" y="199" width="2" height="2" fill="#46464A" /><rect x="2752" y="195" width="2" height="2" fill="#46464A" /><rect x="2756" y="191" width="2" height="2" fill="#46464A" /><rect x="2756" y="199" width="2" height="2" fill="#46464A" /><rect x="2760" y="195" width="2" height="2" fill="#46464A" /><rect x="2764" y="191" width="2" height="2" fill="#46464A" /><rect x="2764" y="199" width="2" height="2" fill="#46464A" /><rect x="2768" y="195" width="2" height="2" fill="#46464A" /><rect x="2772" y="191" width="2" height="2" fill="#46464A" /><rect x="2772" y="199" width="2" height="2" fill="#46464A" /><rect x="2776" y="195" width="2" height="2" fill="#46464A" /><rect x="2780" y="191" width="2" height="2" fill="#46464A" /><rect x="2780" y="199" width="2" height="2" fill="#46464A" /><rect x="2784" y="195" width="2" height="2" fill="#46464A" /><rect x="2788" y="191" width="2" height="2" fill="#46464A" /><rect x="2788" y="199" width="2" height="2" fill="#46464A" /><rect x="2792" y="195" width="2" height="2" fill="#46464A" /><rect x="2796" y="191" width="2" height="2" fill="#46464A" /><rect x="2796" y="199" width="2" height="2" fill="#46464A" /><rect x="2800" y="195" width="2" height="2" fill="#46464A" /><rect x="2804" y="191" width="2" height="2" fill="#46464A" /><rect x="2804" y="199" width="2" height="2" fill="#46464A" /><rect x="2808" y="195" width="2" height="2" fill="#46464A" /><rect x="2812" y="191" width="2" height="2" fill="#46464A" /><rect x="2812" y="199" width="2" height="2" fill="#46464A" /><rect x="2816" y="195" width="2" height="2" fill="#46464A" /><rect x="2820" y="191" width="2" height="2" fill="#46464A" /><rect x="2820" y="199" width="2" height="2" fill="#46464A" /><rect x="2824" y="195" width="2" height="2" fill="#46464A" /><rect x="2828" y="191" width="2" height="2" fill="#46464A" /><rect x="2828" y="199" width="2" height="2" fill="#46464A" /><rect x="2832" y="195" width="2" height="2" fill="#46464A" /><rect x="2836" y="191" width="2" height="2" fill="#46464A" /><rect x="2836" y="199" width="2" height="2" fill="#46464A" /><rect x="2840" y="195" width="2" height="2" fill="#46464A" /><rect x="2844" y="191" width="2" height="2" fill="#46464A" /><rect x="2844" y="199" width="2" height="2" fill="#46464A" /><rect x="2848" y="195" width="2" height="2" fill="#46464A" /><rect x="2852" y="191" width="2" height="2" fill="#46464A" /><rect x="2852" y="199" width="2" height="2" fill="#46464A" /><rect x="2856" y="195" width="2" height="2" fill="#46464A" /><rect x="2860" y="191" width="2" height="2" fill="#46464A" /><rect x="2860" y="199" width="2" height="2" fill="#46464A" /><rect x="2864" y="195" width="2" height="2" fill="#46464A" /><rect x="2868" y="191" width="2" height="2" fill="#46464A" /><rect x="2868" y="199" width="2" height="2" fill="#46464A" /><path d="M2886.0 191.7H2902.0L2894 200.2Z" fill="#F1F1F1" /><path d="M2924.5 197.0V185.8H2931.9V197.0" fill="none" stroke="#F1F1F1" stroke-width="2" /><rect x="2928.9" y="184.8" width="4" height="13" fill="#F1F1F1" /><rect x="2920.9" y="197.0" width="14.4" height="2" fill="#F1F1F1" /><rect x="2927.1" y="198.8" width="2" height="8" fill="#F1F1F1" /><path d="M2953.2 188.8L2970.7999999999997 203.4M2970.7999999999997 188.8L2953.2 203.4" fill="none" stroke="#F1F1F1" stroke-width="3" /><rect x="2425" y="1176" width="2" height="2" fill="#46464A" /><rect x="2425" y="1184" width="2" height="2" fill="#46464A" /><rect x="2429" y="1180" width="2" height="2" fill="#46464A" /><rect x="2433" y="1176" width="2" height="2" fill="#46464A" /><rect x="2433" y="1184" width="2" height="2" fill="#46464A" /><rect x="2437" y="1180" width="2" height="2" fill="#46464A" /><rect x="2441" y="1176" width="2" height="2" fill="#46464A" /><rect x="2441" y="1184" width="2" height="2" fill="#46464A" /><rect x="2445" y="1180" width="2" height="2" fill="#46464A" /><rect x="2449" y="1176" width="2" height="2" fill="#46464A" /><rect x="2449" y="1184" width="2" height="2" fill="#46464A" /><rect x="2453" y="1180" width="2" height="2" fill="#46464A" /><rect x="2457" y="1176" width="2" height="2" fill="#46464A" /><rect x="2457" y="1184" width="2" height="2" fill="#46464A" /><rect x="2461" y="1180" width="2" height="2" fill="#46464A" /><rect x="2465" y="1176" width="2" height="2" fill="#46464A" /><rect x="2465" y="1184" width="2" height="2" fill="#46464A" /><rect x="2469" y="1180" width="2" height="2" fill="#46464A" /><rect x="2473" y="1176" width="2" height="2" fill="#46464A" /><rect x="2473" y="1184" width="2" height="2" fill="#46464A" /><rect x="2477" y="1180" width="2" height="2" fill="#46464A" /><rect x="2481" y="1176" width="2" height="2" fill="#46464A" /><rect x="2481" y="1184" width="2" height="2" fill="#46464A" /><rect x="2485" y="1180" width="2" height="2" fill="#46464A" /><rect x="2489" y="1176" width="2" height="2" fill="#46464A" /><rect x="2489" y="1184" width="2" height="2" fill="#46464A" /><rect x="2493" y="1180" width="2" height="2" fill="#46464A" /><rect x="2497" y="1176" width="2" height="2" fill="#46464A" /><rect x="2497" y="1184" width="2" height="2" fill="#46464A" /><rect x="2501" y="1180" width="2" height="2" fill="#46464A" /><rect x="2505" y="1176" width="2" height="2" fill="#46464A" /><rect x="2505" y="1184" width="2" height="2" fill="#46464A" /><rect x="2509" y="1180" width="2" height="2" fill="#46464A" /><rect x="2513" y="1176" width="2" height="2" fill="#46464A" /><rect x="2513" y="1184" width="2" height="2" fill="#46464A" /><rect x="2517" y="1180" width="2" height="2" fill="#46464A" /><rect x="2521" y="1176" width="2" height="2" fill="#46464A" /><rect x="2521" y="1184" width="2" height="2" fill="#46464A" /><rect x="2525" y="1180" width="2" height="2" fill="#46464A" /><rect x="2529" y="1176" width="2" height="2" fill="#46464A" /><rect x="2529" y="1184" width="2" height="2" fill="#46464A" /><rect x="2533" y="1180" width="2" height="2" fill="#46464A" /><rect x="2537" y="1176" width="2" height="2" fill="#46464A" /><rect x="2537" y="1184" width="2" height="2" fill="#46464A" /><rect x="2541" y="1180" width="2" height="2" fill="#46464A" /><rect x="2545" y="1176" width="2" height="2" fill="#46464A" /><rect x="2545" y="1184" width="2" height="2" fill="#46464A" /><rect x="2549" y="1180" width="2" height="2" fill="#46464A" /><rect x="2553" y="1176" width="2" height="2" fill="#46464A" /><rect x="2553" y="1184" width="2" height="2" fill="#46464A" /><rect x="2557" y="1180" width="2" height="2" fill="#46464A" /><rect x="2561" y="1176" width="2" height="2" fill="#46464A" /><rect x="2561" y="1184" width="2" height="2" fill="#46464A" /><rect x="2565" y="1180" width="2" height="2" fill="#46464A" /><rect x="2569" y="1176" width="2" height="2" fill="#46464A" /><rect x="2569" y="1184" width="2" height="2" fill="#46464A" /><rect x="2573" y="1180" width="2" height="2" fill="#46464A" /><rect x="2577" y="1176" width="2" height="2" fill="#46464A" /><rect x="2577" y="1184" width="2" height="2" fill="#46464A" /><rect x="2581" y="1180" width="2" height="2" fill="#46464A" /><rect x="2585" y="1176" width="2" height="2" fill="#46464A" /><rect x="2585" y="1184" width="2" height="2" fill="#46464A" /><rect x="2589" y="1180" width="2" height="2" fill="#46464A" /><rect x="2593" y="1176" width="2" height="2" fill="#46464A" /><rect x="2593" y="1184" width="2" height="2" fill="#46464A" /><rect x="2597" y="1180" width="2" height="2" fill="#46464A" /><rect x="2601" y="1176" width="2" height="2" fill="#46464A" /><rect x="2601" y="1184" width="2" height="2" fill="#46464A" /><rect x="2605" y="1180" width="2" height="2" fill="#46464A" /><rect x="2609" y="1176" width="2" height="2" fill="#46464A" /><rect x="2609" y="1184" width="2" height="2" fill="#46464A" /><rect x="2613" y="1180" width="2" height="2" fill="#46464A" /><rect x="2617" y="1176" width="2" height="2" fill="#46464A" /><rect x="2617" y="1184" width="2" height="2" fill="#46464A" /><rect x="2621" y="1180" width="2" height="2" fill="#46464A" /><rect x="2625" y="1176" width="2" height="2" fill="#46464A" /><rect x="2625" y="1184" width="2" height="2" fill="#46464A" /><rect x="2629" y="1180" width="2" height="2" fill="#46464A" /><rect x="2633" y="1176" width="2" height="2" fill="#46464A" /><rect x="2633" y="1184" width="2" height="2" fill="#46464A" /><rect x="2637" y="1180" width="2" height="2" fill="#46464A" /><rect x="2641" y="1176" width="2" height="2" fill="#46464A" /><rect x="2641" y="1184" width="2" height="2" fill="#46464A" /><rect x="2645" y="1180" width="2" height="2" fill="#46464A" /><rect x="2649" y="1176" width="2" height="2" fill="#46464A" /><rect x="2649" y="1184" width="2" height="2" fill="#46464A" /><rect x="2653" y="1180" width="2" height="2" fill="#46464A" /><rect x="2657" y="1176" width="2" height="2" fill="#46464A" /><rect x="2657" y="1184" width="2" height="2" fill="#46464A" /><rect x="2661" y="1180" width="2" height="2" fill="#46464A" /><rect x="2665" y="1176" width="2" height="2" fill="#46464A" /><rect x="2665" y="1184" width="2" height="2" fill="#46464A" /><rect x="2669" y="1180" width="2" height="2" fill="#46464A" /><rect x="2673" y="1176" width="2" height="2" fill="#46464A" /><rect x="2673" y="1184" width="2" height="2" fill="#46464A" /><rect x="2677" y="1180" width="2" height="2" fill="#46464A" /><rect x="2681" y="1176" width="2" height="2" fill="#46464A" /><rect x="2681" y="1184" width="2" height="2" fill="#46464A" /><rect x="2685" y="1180" width="2" height="2" fill="#46464A" /><rect x="2689" y="1176" width="2" height="2" fill="#46464A" /><rect x="2689" y="1184" width="2" height="2" fill="#46464A" /><rect x="2693" y="1180" width="2" height="2" fill="#46464A" /><rect x="2697" y="1176" width="2" height="2" fill="#46464A" /><rect x="2697" y="1184" width="2" height="2" fill="#46464A" /><rect x="2701" y="1180" width="2" height="2" fill="#46464A" /><rect x="2705" y="1176" width="2" height="2" fill="#46464A" /><rect x="2705" y="1184" width="2" height="2" fill="#46464A" /><rect x="2709" y="1180" width="2" height="2" fill="#46464A" /><rect x="2713" y="1176" width="2" height="2" fill="#46464A" /><rect x="2713" y="1184" width="2" height="2" fill="#46464A" /><rect x="2717" y="1180" width="2" height="2" fill="#46464A" /><rect x="2721" y="1176" width="2" height="2" fill="#46464A" /><rect x="2721" y="1184" width="2" height="2" fill="#46464A" /><rect x="2725" y="1180" width="2" height="2" fill="#46464A" /><rect x="2729" y="1176" width="2" height="2" fill="#46464A" /><rect x="2729" y="1184" width="2" height="2" fill="#46464A" /><rect x="2733" y="1180" width="2" height="2" fill="#46464A" /><rect x="2737" y="1176" width="2" height="2" fill="#46464A" /><rect x="2737" y="1184" width="2" height="2" fill="#46464A" /><rect x="2741" y="1180" width="2" height="2" fill="#46464A" /><rect x="2745" y="1176" width="2" height="2" fill="#46464A" /><rect x="2745" y="1184" width="2" height="2" fill="#46464A" /><rect x="2749" y="1180" width="2" height="2" fill="#46464A" /><rect x="2753" y="1176" width="2" height="2" fill="#46464A" /><rect x="2753" y="1184" width="2" height="2" fill="#46464A" /><rect x="2757" y="1180" width="2" height="2" fill="#46464A" /><rect x="2761" y="1176" width="2" height="2" fill="#46464A" /><rect x="2761" y="1184" width="2" height="2" fill="#46464A" /><rect x="2765" y="1180" width="2" height="2" fill="#46464A" /><rect x="2769" y="1176" width="2" height="2" fill="#46464A" /><rect x="2769" y="1184" width="2" height="2" fill="#46464A" /><rect x="2773" y="1180" width="2" height="2" fill="#46464A" /><rect x="2777" y="1176" width="2" height="2" fill="#46464A" /><rect x="2777" y="1184" width="2" height="2" fill="#46464A" /><rect x="2781" y="1180" width="2" height="2" fill="#46464A" /><rect x="2785" y="1176" width="2" height="2" fill="#46464A" /><rect x="2785" y="1184" width="2" height="2" fill="#46464A" /><rect x="2789" y="1180" width="2" height="2" fill="#46464A" /><rect x="2793" y="1176" width="2" height="2" fill="#46464A" /><rect x="2793" y="1184" width="2" height="2" fill="#46464A" /><rect x="2797" y="1180" width="2" height="2" fill="#46464A" /><rect x="2801" y="1176" width="2" height="2" fill="#46464A" /><rect x="2801" y="1184" width="2" height="2" fill="#46464A" /><rect x="2805" y="1180" width="2" height="2" fill="#46464A" /><rect x="2809" y="1176" width="2" height="2" fill="#46464A" /><rect x="2809" y="1184" width="2" height="2" fill="#46464A" /><rect x="2813" y="1180" width="2" height="2" fill="#46464A" /><rect x="2817" y="1176" width="2" height="2" fill="#46464A" /><rect x="2817" y="1184" width="2" height="2" fill="#46464A" /><rect x="2821" y="1180" width="2" height="2" fill="#46464A" /><rect x="2825" y="1176" width="2" height="2" fill="#46464A" /><rect x="2825" y="1184" width="2" height="2" fill="#46464A" /><rect x="2829" y="1180" width="2" height="2" fill="#46464A" /><rect x="2833" y="1176" width="2" height="2" fill="#46464A" /><rect x="2833" y="1184" width="2" height="2" fill="#46464A" /><rect x="2837" y="1180" width="2" height="2" fill="#46464A" /><rect x="2841" y="1176" width="2" height="2" fill="#46464A" /><rect x="2841" y="1184" width="2" height="2" fill="#46464A" /><rect x="2845" y="1180" width="2" height="2" fill="#46464A" /><rect x="2849" y="1176" width="2" height="2" fill="#46464A" /><rect x="2849" y="1184" width="2" height="2" fill="#46464A" /><rect x="2853" y="1180" width="2" height="2" fill="#46464A" /><rect x="2857" y="1176" width="2" height="2" fill="#46464A" /><rect x="2857" y="1184" width="2" height="2" fill="#46464A" /><rect x="2861" y="1180" width="2" height="2" fill="#46464A" /><rect x="2865" y="1176" width="2" height="2" fill="#46464A" /><rect x="2865" y="1184" width="2" height="2" fill="#46464A" /><rect x="2869" y="1180" width="2" height="2" fill="#46464A" /><path d="M2886.0 1177H2902.0L2894 1185.2Z" fill="#F1F1F1" /><path d="M2924.5 1182.2V1171H2931.9V1182.2" fill="none" stroke="#F1F1F1" stroke-width="2" /><rect x="2928.9" y="1170" width="4" height="13" fill="#F1F1F1" /><rect x="2920.9" y="1182.2" width="14.4" height="2" fill="#F1F1F1" /><rect x="2927.1" y="1184" width="2" height="8" fill="#F1F1F1" /><path d="M2953.2 1174L2970.7999999999997 1188.4M2970.7999999999997 1174L2953.2 1188.4" fill="none" stroke="#F1F1F1" stroke-width="3" /><path d="M2968.0 1220.6H2979.0L2973.5 1226.3999999999999Z" fill="#F1F1F1" /><circle cx="2324.1" cy="246" r="12.1" fill="#555558"/><path d="M2331.6 246H2317.1M2323.5 239.8L2317.1 246L2323.5 252.2" fill="none" stroke="#2D2D30" stroke-width="3.8" /><circle cx="2368.2" cy="246" r="12.1" fill="#555558"/><path d="M2360.7 246H2375.2M2368.7999999999997 239.8L2375.2 246L2368.7999999999997 252.2" fill="none" stroke="#2D2D30" stroke-width="3.8" /><path d="M2401 247.5V258.9H2423V247.5" fill="none" stroke="#CACACA" stroke-width="2" /><path d="M2398.4 248L2411.9 233.4L2425.6 248" fill="none" stroke="#CACACA" stroke-width="2.4" /><rect x="2408.1" y="248.3" width="7.8" height="10.2" fill="#CACACA" /><rect x="2417.8" y="231.7" width="2.2" height="7" fill="#CACACA" /><path d="M2454.4 236.2H2459.5L2462.5 232.1H2472.1V247.9H2454.4Z" fill="#DCB67A" /><rect x="2463.4" y="234.2" width="7" height="1.4" fill="#2D2D30" /><rect x="2443.8" y="242" width="18.4" height="16.2" fill="#2D2D30" /><path d="M2444.8 244H2461.2V257.2H2444.8Z" fill="none" stroke="#CACACA" stroke-width="2" /><rect x="2443.8" y="242" width="18.4" height="3.4" fill="#CACACA" /><path d="M2446.7 240V235.6H2452" fill="none" stroke="#75BEFF" stroke-width="2" /><path d="M2450.6 231.6L2455 235.6L2450.6 239.6Z" fill="#75BEFF" /><path d="M2471 250V254.8H2467" fill="none" stroke="#75BEFF" stroke-width="2" /><path d="M2468.2 250.6L2463.6 254.8L2468.2 259Z" fill="#75BEFF" /><path d="M2486.1 242.9H2498.1L2492.1 248.9Z" fill="#999999" /><rect x="2510.2" y="226" width="1.9" height="40" fill="#1F1F21" /><rect x="2512.1" y="226" width="1.9" height="40" fill="#46464A" /><path d="M2531.9 232.1H2541.9L2538 236.4V239.8H2535.8V236.4Z" fill="#CACACA" /><circle cx="2548.1" cy="250" r="8.9" fill="none" stroke="#CACACA" stroke-width="2"/><path d="M2547.8 243.8V251H2552" fill="none" stroke="#CACACA" stroke-width="2" /><path d="M2571.8 242.9H2583.8L2577.8 248.9Z" fill="#999999" /><path d="M2599.9 240.1L2607.7 233.9L2610.4 234.4L2605.6 237.9H2620.1V242.2H2605.6L2610 245.6L2607.2 246.2Z" fill="#CACACA" /><path d="M2624 252L2616.7 246.1L2614 246.5L2618.5 249.9H2604V254.1H2618.5L2614 257.6L2616.8 258.1Z" fill="#CACACA" /><path d="M2656.1 238.4A9.9 9.9 0 1 0 2665.7 245.7" fill="none" stroke="#75BEFF" stroke-width="4.3" /><path d="M2656.2 231.8L2664.2 238.3L2656.2 245.2Z" fill="#75BEFF" /><path d="M2691 243H2702.9V255H2691Z" fill="none" stroke="#CACACA" stroke-width="2.2" /><rect x="2693.9" y="247.8" width="6.4" height="2.3" fill="#75BEFF" /><path d="M2693.9 238.9H2707.1V252" fill="none" stroke="#CACACA" stroke-width="2.1" /><path d="M2697.9 234.9H2711.1V248" fill="none" stroke="#CACACA" stroke-width="2.1" /><path d="M2740.6 233.1H2732.6Q2731 233.1 2731 234.7V249.1Q2731 250.7 2732.6 250.7H2734.2" fill="none" stroke="#CACACA" stroke-width="1.9" /><path d="M2743.1 237.7V234.7Q2743.1 233.1 2744.7 233.1H2752.6L2756.9 236.8V249.1Q2756.9 250.7 2755.3 250.7H2754.2" fill="none" stroke="#CACACA" stroke-width="1.9" /><path d="M2752.4 232.6L2757.6 237.2H2752.4Z" fill="#CACACA" /><path d="M2738.7 241.4H2746.4L2751.2 245.6V257.2Q2751.2 258.8 2749.6 258.8H2738.7Q2737.1 258.8 2737.1 257.2V243Q2737.1 241.4 2738.7 241.4Z" fill="#2D2D30" stroke="#CACACA" stroke-width="1.9" /><path d="M2746.2 240.9L2751.8 245.8H2746.2Z" fill="#CACACA" /><rect x="2740.1" y="246.1" width="5.8" height="1.8" fill="#CACACA" /><rect x="2740.1" y="249.9" width="7.8" height="1.8" fill="#CACACA" /><rect x="2740.1" y="254" width="7.8" height="1.8" fill="#CACACA" /><rect x="2772.2" y="226" width="1.9" height="40" fill="#1F1F21" /><rect x="2774.1" y="226" width="1.9" height="40" fill="#46464A" /><path d="M2801.4 238.3L2793.3 245.3L2801.4 252.3M2807.3 238.3L2815.4 245.3L2807.3 252.3" fill="none" stroke="#CACACA" stroke-width="2.7" /><path d="M2837.6 257L2850 246.4" fill="none" stroke="#CACACA" stroke-width="5.9" stroke-linecap="round"/><circle cx="2852.9" cy="241.3" r="9.3" fill="#CACACA"/><path d="M2853.2 241L2864.4 229.8" fill="none" stroke="#2D2D30" stroke-width="5.2" /><rect x="2871.1" y="222.8" width="41.9" height="46.2" fill="none" stroke="#3399FF" stroke-width="2"/><rect x="2878" y="247.8" width="28" height="2.2" fill="#CACACA" /><rect x="2890" y="242" width="16" height="8" fill="#CACACA" /><circle cx="2947.1" cy="292" r="7.3" fill="none" stroke="#F1F1F1" stroke-width="4"/><path d="M2941.8 297.6L2934 305.2" fill="none" stroke="#F1F1F1" stroke-width="5.2" /><path d="M2966.9 292.7H2978.9L2972.9 298.9Z" fill="#F1F1F1" /><rect x="2320.2" y="331.9" width="27.8" height="5.9" fill="#CACACA" /><path d="M2321.2 337V345M2347 337V355H2338.1" fill="none" stroke="#CACACA" stroke-width="2" /><path d="M2321 347.2L2323.2 346.2L2329 350.6L2333 344.6L2336 346V358.2L2333 359.6L2329 353.4L2323.2 357.6L2321 356.6Z M2323 349.4V354.6L2326.4 352Z M2333 349V355L2329 352Z" fill="#D59DFF" fill-rule="evenodd" stroke="#D59DFF" stroke-width="0.7"/><path d="M2328.1 374.8V388H2314.9Z" fill="#F1F1F1" /><rect x="2356" y="374" width="28" height="20" fill="#15275C" stroke="#8C9AC6" stroke-width="1.6"/><rect x="2356.6" y="373.4" width="26.8" height="3.6" fill="#0A0A0A" /><rect x="2355.8" y="368" width="8" height="6" fill="#6FCB45" /><rect x="2362" y="366" width="24" height="14" rx="3" fill="#9BE07A"/><circle cx="2367.0" cy="373" r="2.1" fill="#D6F5C6"/><circle cx="2373.5" cy="373" r="2.1" fill="#D6F5C6"/><circle cx="2380.0" cy="373" r="2.1" fill="#D6F5C6"/><circle cx="2361.8" cy="390.2" r="7.0" fill="#7E7E7E" stroke="#1a1a1a" stroke-width="1"/><path d="M2361.8 382V398.4M2353.6 390.2H2370" fill="none" stroke="#A4A4A4" stroke-width="3.2" /><circle cx="2361.8" cy="390.2" r="5.2" fill="#9A9A9A"/><circle cx="2361.8" cy="390.2" r="2.4" fill="#111"/><path d="M2353.1 409.3L2360.6 417.2L2353.1 425.1Z" fill="none" stroke="#F1F1F1" stroke-width="1.8" /><path d="M2353.1 445.3L2360.6 453.2L2353.1 461.1Z" fill="none" stroke="#F1F1F1" stroke-width="1.8" /><rect x="2391.8" y="412.4" width="8" height="9.5" fill="#CACACA" /><rect x="2402.2" y="416" width="3.7" height="2" fill="#CACACA" /><rect x="2408" y="410" width="12.2" height="14" fill="#CACACA" /><path d="M2393.9 446.2H2401L2403 441.8H2420.2V464H2393.9Z" fill="#DCB67A" /><rect x="2404.8" y="443.7" width="13.2" height="1.8" fill="#3a3020" /><rect x="2297.4" y="1245.4" width="35.2" height="37" fill="none" stroke="#3399FF" stroke-width="1.2"/><rect x="2300.9" y="1250" width="10" height="10" fill="#CACACA" /><rect x="2302.9" y="1254.1" width="6" height="1.8" fill="#1a1a1a" /><rect x="2305.0" y="1252" width="1.8" height="6" fill="#1a1a1a" /><rect x="2300.9" y="1268.3" width="10" height="10" fill="#CACACA" /><rect x="2302.9" y="1272.3999999999999" width="6" height="1.8" fill="#1a1a1a" /><rect x="2305.0" y="1270.3" width="1.8" height="6" fill="#1a1a1a" /><rect x="2313" y="1251" width="9.7" height="1.7" fill="#CACACA" /><rect x="2313" y="1255.1" width="9.7" height="1.7" fill="#CACACA" /><rect x="2313" y="1259.2" width="9.7" height="1.7" fill="#CACACA" /><rect x="2313" y="1263.3" width="9.7" height="1.7" fill="#CACACA" /><rect x="2313" y="1267.4" width="9.7" height="1.7" fill="#CACACA" /><rect x="2325.3" y="1255.1" width="3.7" height="1.7" fill="#CACACA" /><rect x="2325.3" y="1259.2" width="3.7" height="1.7" fill="#CACACA" /><rect x="2325.3" y="1263.3" width="3.7" height="1.7" fill="#CACACA" /><rect x="2325.3" y="1267.4" width="3.7" height="1.7" fill="#CACACA" /><rect x="2313" y="1272.6" width="9.7" height="1.7" fill="#CACACA" /><rect x="2313" y="1276.8" width="9.7" height="1.7" fill="#CACACA" /><rect x="2325.3" y="1276.8" width="3.7" height="1.7" fill="#CACACA" /><rect x="2337" y="1249.8" width="14.1" height="14.2" fill="#CACACA" /><text x="2344" y="1262.4" font-family="Liberation Sans" font-weight="700" font-size="14.5" text-anchor="middle" fill="#2a2a2a">A</text><text x="2344.2" y="1278.3" font-family="Liberation Sans" font-weight="700" font-size="14.5" text-anchor="middle" fill="#CACACA">Z</text><path d="M2359 1256.2V1271" fill="none" stroke="#55BBFF" stroke-width="3.4" /><path d="M2353.4 1266.5L2359 1273L2364.6 1266.5" fill="none" stroke="#55BBFF" stroke-width="3.2" /><rect x="2372" y="1247" width="1.2" height="36" fill="#222224" /><path d="M2381 1276.5L2394.5 1263" fill="none" stroke="#A0A0A0" stroke-width="8.4" stroke-linecap="round"/><circle cx="2399.4" cy="1258.4" r="9.9" fill="#A0A0A0"/><path d="M2381 1276.5L2394.5 1263" fill="none" stroke="#868686" stroke-width="6" stroke-linecap="round"/><circle cx="2399.4" cy="1258.4" r="8.7" fill="#868686"/><path d="M2399.5 1255.6L2403 1252L2406.2 1255.2L2402.6 1258.8Z" fill="#5E5E5E" /></svg>
<span style="left:88.10px;top:25.39px;font-size:23.4px;line-height:23.4px;color:#999999;font-weight:400;letter-spacing:0.350px;">MyFirstUnityProject - Microsoft Visual Studio</span>
<span style="left:2402.00px;top:17.89px;font-size:23.4px;line-height:23.4px;color:#999999;font-weight:400;letter-spacing:0.158px;">Quick Launch (Ctrl+Q)</span>
<span style="left:20.20px;top:72.89px;font-size:23.4px;line-height:23.4px;color:#F1F1F1;font-weight:400;letter-spacing:-0.094px;">File</span>
<span style="left:96.80px;top:72.89px;font-size:23.4px;line-height:23.4px;color:#F1F1F1;font-weight:400;letter-spacing:-0.202px;">Edit</span>
<span style="left:177.40px;top:72.89px;font-size:23.4px;line-height:23.4px;color:#F1F1F1;font-weight:400;letter-spacing:-0.095px;">View</span>
<span style="left:268.20px;top:72.89px;font-size:23.4px;line-height:23.4px;color:#F1F1F1;font-weight:400;letter-spacing:-0.050px;">Project</span>
<span style="left:381.00px;top:72.89px;font-size:23.4px;line-height:23.4px;color:#F1F1F1;font-weight:400;letter-spacing:0.549px;">Build</span>
<span style="left:475.00px;top:72.89px;font-size:23.4px;line-height:23.4px;color:#F1F1F1;font-weight:400;letter-spacing:0.770px;">Debug</span>
<span style="left:587.00px;top:72.89px;font-size:23.4px;line-height:23.4px;color:#F1F1F1;font-weight:400;letter-spacing:0.429px;">Team</span>
<span style="left:684.40px;top:72.89px;font-size:23.4px;line-height:23.4px;color:#F1F1F1;font-weight:400;letter-spacing:0.073px;">Tools</span>
<span style="left:779.60px;top:72.89px;font-size:23.4px;line-height:23.4px;color:#F1F1F1;font-weight:400;letter-spacing:-0.833px;">Test</span>
<span style="left:861.50px;top:72.89px;font-size:23.4px;line-height:23.4px;color:#F1F1F1;font-weight:400;letter-spacing:-0.068px;">Analyze</span>
<span style="left:984.00px;top:72.89px;font-size:23.4px;line-height:23.4px;color:#F1F1F1;font-weight:400;letter-spacing:0.740px;">Window</span>
<span style="left:1110.70px;top:72.89px;font-size:23.4px;line-height:23.4px;color:#F1F1F1;font-weight:400;letter-spacing:0.568px;">Help</span>
<span style="left:557.30px;top:122.89px;font-size:23.4px;line-height:23.4px;color:#F1F1F1;font-weight:400;letter-spacing:0.645px;">Debug</span>
<span style="left:699.30px;top:122.89px;font-size:23.4px;line-height:23.4px;color:#F1F1F1;font-weight:400;letter-spacing:-0.700px;">Any CPU</span>
<span style="left:965.30px;top:122.89px;font-size:23.4px;line-height:23.4px;color:#F1F1F1;font-weight:400;letter-spacing:0.456px;">Attach to Unity</span>
<span style="left:0.00px;top:-18.91px;font-size:23.4px;line-height:23.4px;color:#D0D0D0;font-weight:400;letter-spacing:0.596px;left:0;top:0;transform-origin:0 0;transform:translate(43.2px,171.5px) rotate(90deg);">Toolbox</span>
<span style="left:70.20px;top:184.59px;font-size:23.4px;line-height:23.4px;color:#FFFFFF;font-weight:400;letter-spacing:-0.412px;">ExtendedFlyCam.cs</span>
<span style="left:107.20px;top:227.69px;font-size:23.4px;line-height:23.4px;color:#F1F1F1;font-weight:400;letter-spacing:-0.241px;">Assembly-CSharp</span>
<span style="left:846.90px;top:227.69px;font-size:23.4px;line-height:23.4px;color:#999999;font-weight:400;letter-spacing:-0.217px;">ExtendedFlyCam</span>
<span style="left:1586.20px;top:227.99px;font-size:23.4px;line-height:23.4px;color:#999999;font-weight:400;letter-spacing:-0.648px;">Start()</span>
<span style="left:68.40px;top:1830.99px;font-size:23.4px;line-height:23.4px;color:#F1F1F1;font-weight:400;letter-spacing:-0.606px;">100 %</span>
<span style="left:2301.60px;top:186.69px;font-size:23.4px;line-height:23.4px;color:#D0D0D0;font-weight:400;letter-spacing:0.248px;">Solution Explorer</span>
<span style="left:2303.00px;top:286.59px;font-size:23.4px;line-height:23.4px;color:#999999;font-weight:400;letter-spacing:0.098px;">Search Solution Explorer (Ctrl+;)</span>
<span style="left:2359.70px;top:336.79px;font-size:23.4px;line-height:23.4px;color:#F1F1F1;font-weight:400;letter-spacing:0.405px;">Solution &#x27;MyFirstUnityProject&#x27; (1 project)</span>
<span style="left:2396.30px;top:372.79px;font-size:23.4px;line-height:23.4px;color:#FFFFFF;font-weight:700;letter-spacing:-0.221px;">Assembly-CSharp</span>
<span style="left:2432.40px;top:408.79px;font-size:23.4px;line-height:23.4px;color:#F1F1F1;font-weight:400;letter-spacing:-0.435px;">References</span>
<span style="left:2432.30px;top:444.19px;font-size:23.4px;line-height:23.4px;color:#F1F1F1;font-weight:400;letter-spacing:-0.960px;">Assets</span>
<span style="left:2303.60px;top:1114.19px;font-size:23.4px;line-height:23.4px;color:#0097FB;font-weight:400;letter-spacing:0.273px;">Solution Explorer</span>
<span style="left:2510.00px;top:1115.49px;font-size:23.4px;line-height:23.4px;color:#D0D0D0;font-weight:400;letter-spacing:-0.084px;">Team Explorer</span>
<span style="left:2302.30px;top:1171.59px;font-size:23.4px;line-height:23.4px;color:#D0D0D0;font-weight:400;letter-spacing:0.054px;">Properties</span>
</div></body></html>
